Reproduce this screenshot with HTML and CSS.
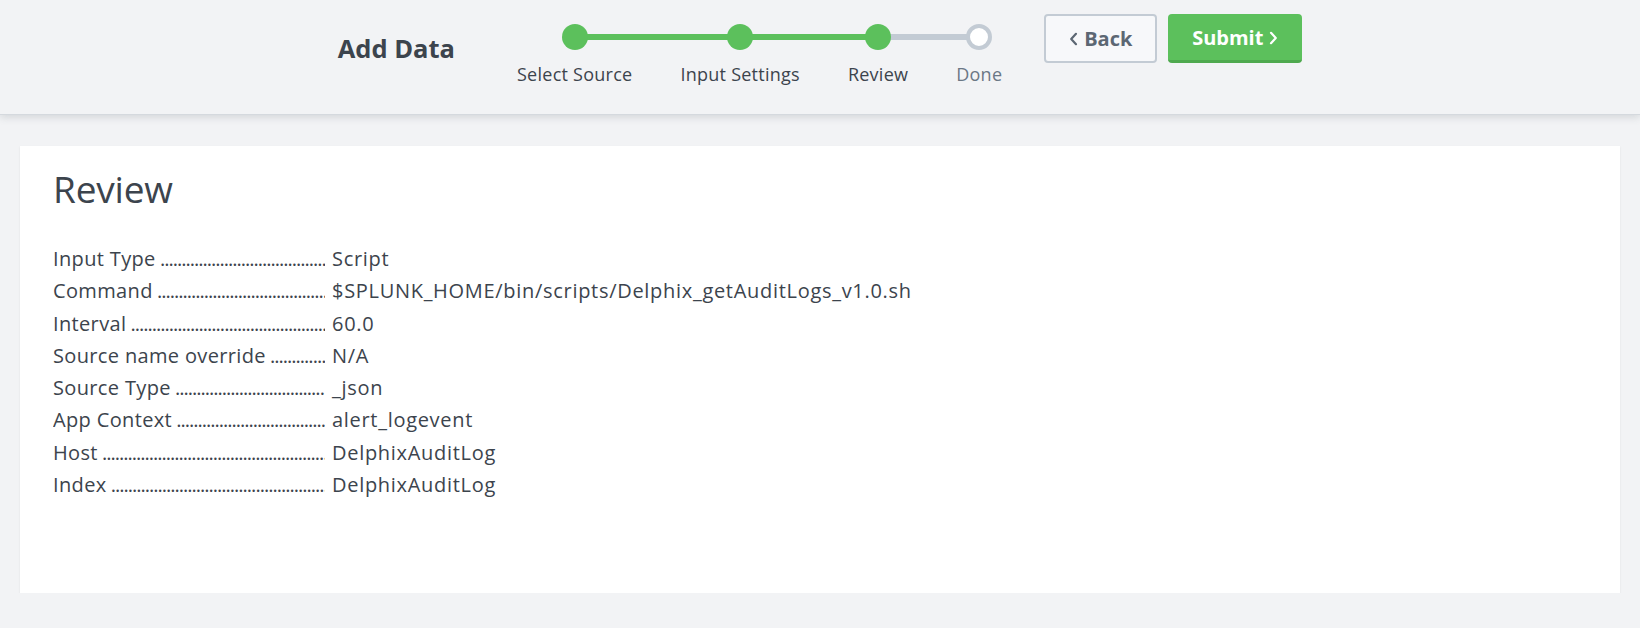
FILE: index.html
```html
<!DOCTYPE html>
<html>
<head>
<meta charset="utf-8">
<link rel="stylesheet" href="styles.css">
</head>
<body>
<header class="topbar">
  <div class="topbar-inner">
    <h1 class="page-title">Add Data</h1>
    <ol class="steps">
      <li class="step done first"><span class="dot"></span><span class="label">Select Source</span></li>
      <li class="step done"><span class="dot"></span><span class="label">Input Settings</span></li>
      <li class="step done current"><span class="dot"></span><span class="label">Review</span></li>
      <li class="step todo last"><span class="dot"></span><span class="label">Done</span></li>
    </ol>
    <div class="actions">
      <button class="btn btn-back"><svg class="chev" viewBox="0 0 9 14" width="9" height="14"><path d="M7 1.8 L2.2 7 L7 12.2" fill="none" stroke="currentColor" stroke-width="2.2" stroke-linecap="round" stroke-linejoin="round"/></svg>Back</button>
      <button class="btn btn-submit">Submit<svg class="chev" viewBox="0 0 9 14" width="9" height="14"><path d="M2 1.8 L6.8 7 L2 12.2" fill="none" stroke="currentColor" stroke-width="2.2" stroke-linecap="round" stroke-linejoin="round"/></svg></button>
    </div>
  </div>
</header>
<main class="content">
  <section class="card">
    <h2 class="card-title">Review</h2>
    <dl class="review-list">
      <div class="row"><dt>Input Type</dt><dd>Script</dd></div>
      <div class="row"><dt>Command</dt><dd>$SPLUNK_HOME/bin/scripts/Delphix_getAuditLogs_v1.0.sh</dd></div>
      <div class="row"><dt>Interval</dt><dd>60.0</dd></div>
      <div class="row"><dt>Source name override</dt><dd>N/A</dd></div>
      <div class="row"><dt>Source Type</dt><dd>_json</dd></div>
      <div class="row"><dt>App Context</dt><dd>alert_logevent</dd></div>
      <div class="row"><dt>Host</dt><dd>DelphixAuditLog</dd></div>
      <div class="row"><dt>Index</dt><dd>DelphixAuditLog</dd></div>
    </dl>
  </section>
</main>
</body>
</html>
```

FILE: styles.css
```css
* { box-sizing: border-box; }
html, body {
  margin: 0;
  padding: 0;
  background: #f2f3f5;
  font-family: "Open Sans", "Lato", sans-serif;
  color: #3c444d;
}
body { overflow: hidden; }
.topbar {
  height: 114px;
  background: #f2f3f5;
  box-shadow: 0 1px 0 #d5d9de, 0 3px 8px rgba(60, 70, 85, 0.18);
  position: relative;
  z-index: 1;
}
.topbar-inner {
  display: flex;
  justify-content: center;
  align-items: flex-start;
  padding-top: 14px;
}
.page-title {
  margin: 18px 38px 0 0;
  font-size: 25.5px;
  line-height: 32px;
  font-weight: 700;
  color: #3c444d;
  letter-spacing: 0;
}
.steps {
  list-style: none;
  margin: 10px 0 0 0;
  padding: 0;
  display: flex;
}
.step {
  position: relative;
  padding: 0 24px;
  display: flex;
  flex-direction: column;
  align-items: center;
}
.step::before,
.step::after {
  content: "";
  position: absolute;
  top: 10px;
  height: 6px;
  background: #5cc05c;
  width: 50%;
}
.step::before { left: 0; }
.step::after { right: 0; }
.step.first::before { display: none; }
.step.last::after { display: none; }
.step.current::after,
.step.todo::before { background: #c3cbd4; }
.dot {
  position: relative;
  z-index: 1;
  width: 26px;
  height: 26px;
  border-radius: 50%;
  background: #5cc05c;
}
.step.todo .dot {
  background: #ffffff;
  border: 4px solid #c3cbd4;
}
.label {
  margin-top: 13px;
  font-size: 18px;
  line-height: 22px;
  color: #3c444d;
  white-space: nowrap;
  letter-spacing: 0.25px;
}
.step.todo .label { color: #6b7785; }
.actions {
  display: flex;
  gap: 11px;
  margin-left: 18px;
}
.btn {
  height: 49px;
  border-radius: 4px;
  font-family: inherit;
  font-size: 20px;
  font-weight: 700;
  display: flex;
  align-items: center;
  justify-content: center;
  gap: 6px;
  cursor: pointer;
  letter-spacing: 0;
}
.btn-back {
  width: 113px;
  background: #f7f8fa;
  border: 2px solid #c3cbd4;
  color: #5c6773;
}
.btn-submit {
  width: 134px;
  background: #5cc05c;
  border: none;
  border-bottom: 3px solid #4fa94f;
  color: #ffffff;
  padding-top: 2px;
}
.chev { display: block; }
.content {
  padding: 32px 20px 0;
}
.card {
  background: #ffffff;
  height: 447px;
  padding: 20px 33px;
  box-shadow: 0 1px 2px rgba(0, 0, 0, 0.08);
}
.card-title {
  margin: 0 0 31px;
  font-size: 37px;
  line-height: 46px;
  font-weight: 400;
  color: #3c444d;
  letter-spacing: -0.2px;
}
.review-list {
  margin: 0;
  font-size: 20px;
  letter-spacing: 0.35px;
}
.row {
  display: flex;
  line-height: 32.3px;
}
.row dt {
  width: 272px;
  margin-right: 7px;
  overflow: hidden;
  white-space: nowrap;
}
.row dt::after {
  content: " ....................................................................................................";
  letter-spacing: -1px;
}
.row dd {
  margin: 0;
  white-space: nowrap;
  letter-spacing: 0.7px;
}
```
